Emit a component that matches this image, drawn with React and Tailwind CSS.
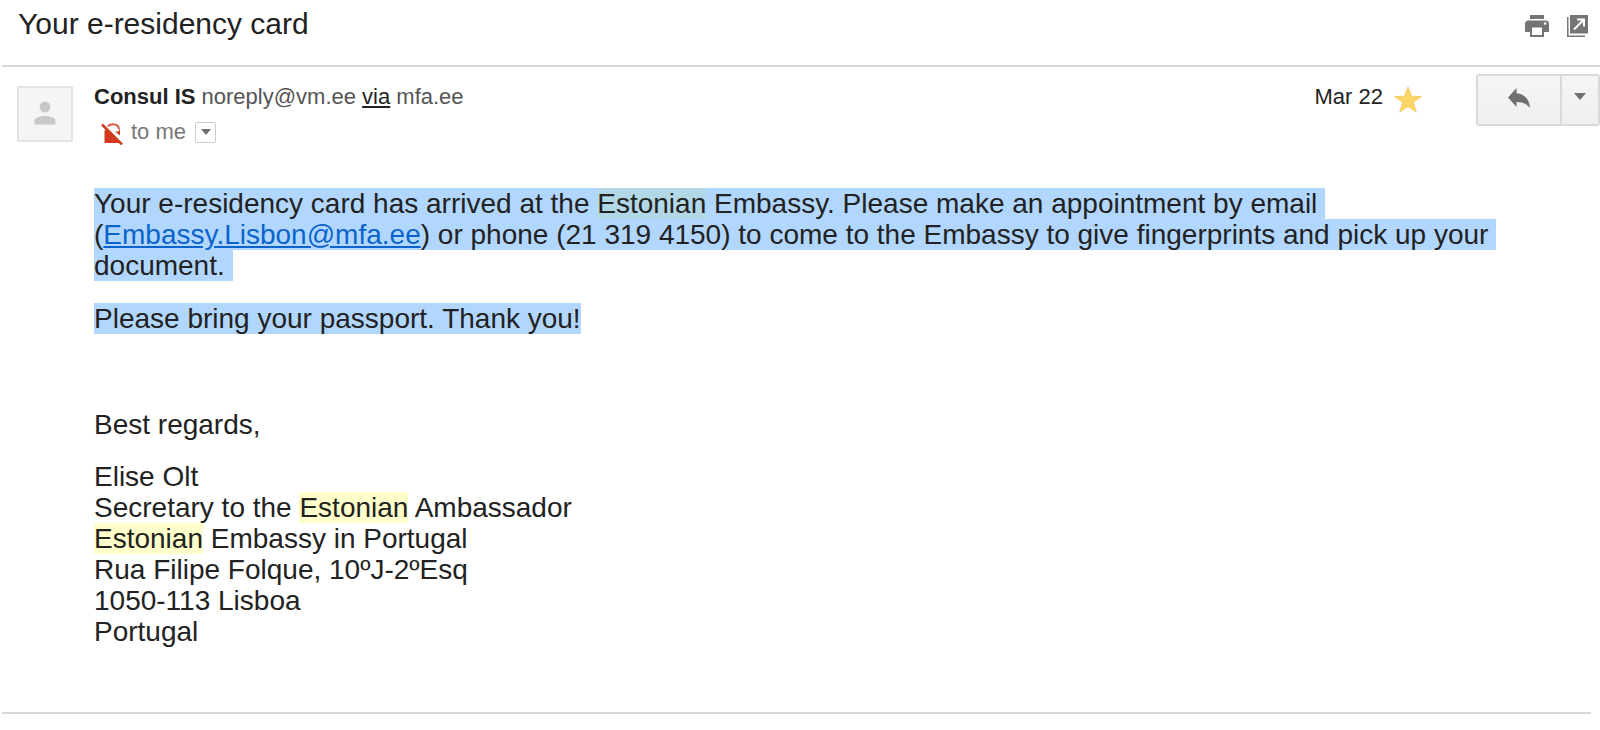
function PrintIcon() {
  return (
    <svg viewBox="0 0 24 22" className="h-[22px] w-6" fill="#757575" aria-hidden="true">
      <path d="M5 0h14v4H5z" />
      <path
        fillRule="evenodd"
        d="M3.5 5.500h17A3.500 3.500 0 0 1 24 9v8h-5v5H5v-5H0V9A3.500 3.500 0 0 1 3.500 5.500zM7 12.500V20h10v-7.500zM20 7.200a1.300 1.300 0 1 0 0 2.600 1.300 1.300 0 0 0 0-2.600z"
      />
    </svg>
  );
}

function NewWindowIcon() {
  return (
    <svg viewBox="0 0 21 22" className="h-[22px] w-[21px]" aria-hidden="true">
      <path d="M0 2h1.500v18.500H18V22H0z" fill="#757575" />
      <path d="M3 0h18v18.500H3z" fill="#757575" />
      <path d="M10 4.500h7v7M17 4.500L7 14.500" fill="none" stroke="#fff" strokeWidth="2" />
    </svg>
  );
}

function PersonIcon() {
  return (
    <svg viewBox="0 0 22 24" className="h-6 w-[22px]" fill="#c8c8c8" aria-hidden="true">
      <circle cx="11" cy="6" r="5.500" />
      <path d="M0.500 23.500V20c0-3.600 5.500-5 10.500-5s10.500 1.400 10.500 5v3.500z" />
    </svg>
  );
}

function NoEncryptionIcon() {
  return (
    <svg viewBox="0 0 22 22" className="h-[22px] w-[22px]" aria-hidden="true">
      <path d="M7 3.500C8 2 9.800 1.300 12 1.300c3.500 0 5.800 1.700 6 5.200" fill="none" stroke="#dc5a46" strokeWidth="2" />
      <path d="M14 8.500h3l2-2v6z" fill="#d23a20" />
      <path d="M3.500 7.500L6 6l12.500 12.500V20h-15z" fill="#d23a20" />
      <path d="M1 1.500L21 21.500" stroke="#d23a20" strokeWidth="2.500" />
    </svg>
  );
}

function Star() {
  return (
    <svg viewBox="0 0 28 27" className="h-[27px] w-7" aria-hidden="true">
      <path
        d="M14 1l3.400 9.200 9.800.300-7.800 6 2.800 9.600L14 20.500l-8.200 5.600 2.800-9.600-7.800-6 9.800-.300z"
        fill="#ffd666"
        stroke="#f0cc6c"
      />
    </svg>
  );
}

function ReplyIcon() {
  return (
    <svg viewBox="0 0 22 20" className="h-5 w-[22px]" fill="#6f6f6f" aria-hidden="true">
      <path d="M8.500 0v5.200C16.500 5.800 21.500 11.500 22 20c-3.200-4.200-7.500-6-13.500-6V19L0 9.500z" />
    </svg>
  );
}

function Caret({ className }) {
  return (
    <svg viewBox="0 0 12 7" className={className} fill="#6f6f6f" aria-hidden="true">
      <path d="M0 0h12L6 7z" />
    </svg>
  );
}

function Selected({ children }) {
  return <span className="bg-[#b2d7ff]">{children}</span>;
}

function Term({ selected }) {
  return (
    <mark className={selected ? "bg-[#b2d8e8] text-inherit" : "bg-[#ffffcc] text-inherit"}>Estonian</mark>
  );
}

export default function App() {
  return (
    <main className="bg-white pb-4 font-['Liberation_Sans',Arial,sans-serif] text-[#222]">
      {/* Subject */}
      <header className="ml-0.5 flex h-[67px] items-start justify-between border-b-2 border-[#d8d8d8] pl-4 pr-3">
        <h1 className="pt-1.5 text-[30px] leading-9">Your e-residency card</h1>
        <div className="flex gap-[18px] pt-[15px]">
          <button type="button" aria-label="Print all">
            <PrintIcon />
          </button>
          <button type="button" aria-label="In new window">
            <NewWindowIcon />
          </button>
        </div>
      </header>

      <article className="mr-[9px] ml-0.5 border-b-2 border-[#d8d8d8] pb-[65px]">
        {/* Sender */}
        <div className="-mr-[9px] flex items-start pt-[7px] pl-[15px] text-[22px] leading-[26px]">
          <div className="mt-3 flex h-14 w-14 items-center justify-center border-2 border-[#e4e4e4] bg-[#f5f5f5] pb-0.5">
            <PersonIcon />
          </div>
          <div className="ml-[21px] flex-1 pt-2.5 text-[#555]">
            <p>
              <b className="text-[#222]">Consul IS</b> noreply@vm.ee{" "}
              <a href="#via" className="text-[#222] underline">via</a> mfa.ee
            </p>
            <div className="mt-[9px] flex items-center text-[#777]">
              <span className="mr-2 ml-[7px] pt-1">
                <NoEncryptionIcon />
              </span>
              to me
              <button
                type="button"
                aria-label="Show details"
                className="ml-[9px] flex h-[21px] w-[21px] items-center justify-center rounded-xs border border-[#ccc]"
              >
                <Caret className="h-1.5 w-2.5" />
              </button>
            </div>
          </div>
          <time className="pt-2.5">Mar 22</time>
          <button type="button" aria-label="Starred" className="mt-3 ml-[11px]">
            <Star />
          </button>
          <div className="ml-[54px] flex h-[52px] rounded-[3px] border-2 border-[#d9d9d9] bg-linear-to-b from-[#f5f5f5] to-[#efefef]">
            <button type="button" aria-label="Reply" className="flex w-[84px] items-center justify-center border-r-2 border-[#d9d9d9] pb-1">
              <ReplyIcon />
            </button>
            <button type="button" aria-label="More" className="flex w-9 items-center justify-center pb-2">
              <Caret className="h-[7px] w-3" />
            </button>
          </div>
        </div>

        {/* Body */}
        <div className="pt-[43px] pl-[92px] text-[28px] leading-[31px]">
          <p className="whitespace-pre-wrap">
            <Selected>
              Your e-residency card has arrived at the <Term selected />
              {" Embassy. Please make an appointment by email "}
              {"("}
              <a href="mailto:Embassy.Lisbon@mfa.ee" className="text-[#0b64cc] underline">Embassy.Lisbon@mfa.ee</a>
              {") or phone (21 319 4150) to come to the Embassy to give fingerprints and pick up your "}
              {"document. "}
            </Selected>
          </p>
          <p className="mt-[22px]">
            <Selected>Please bring your passport. Thank you!</Selected>
          </p>
          <p className="mt-[75px]">Best regards,</p>
          <p className="mt-[21px]">
            Elise Olt
            <br />
            Secretary to the <Term /> Ambassador
            <br />
            <Term /> Embassy in Portugal
            <br />
            Rua Filipe Folque, 10ºJ-2ºEsq
            <br />
            1050-113 Lisboa
            <br />
            Portugal
          </p>
        </div>
      </article>
    </main>
  );
}
